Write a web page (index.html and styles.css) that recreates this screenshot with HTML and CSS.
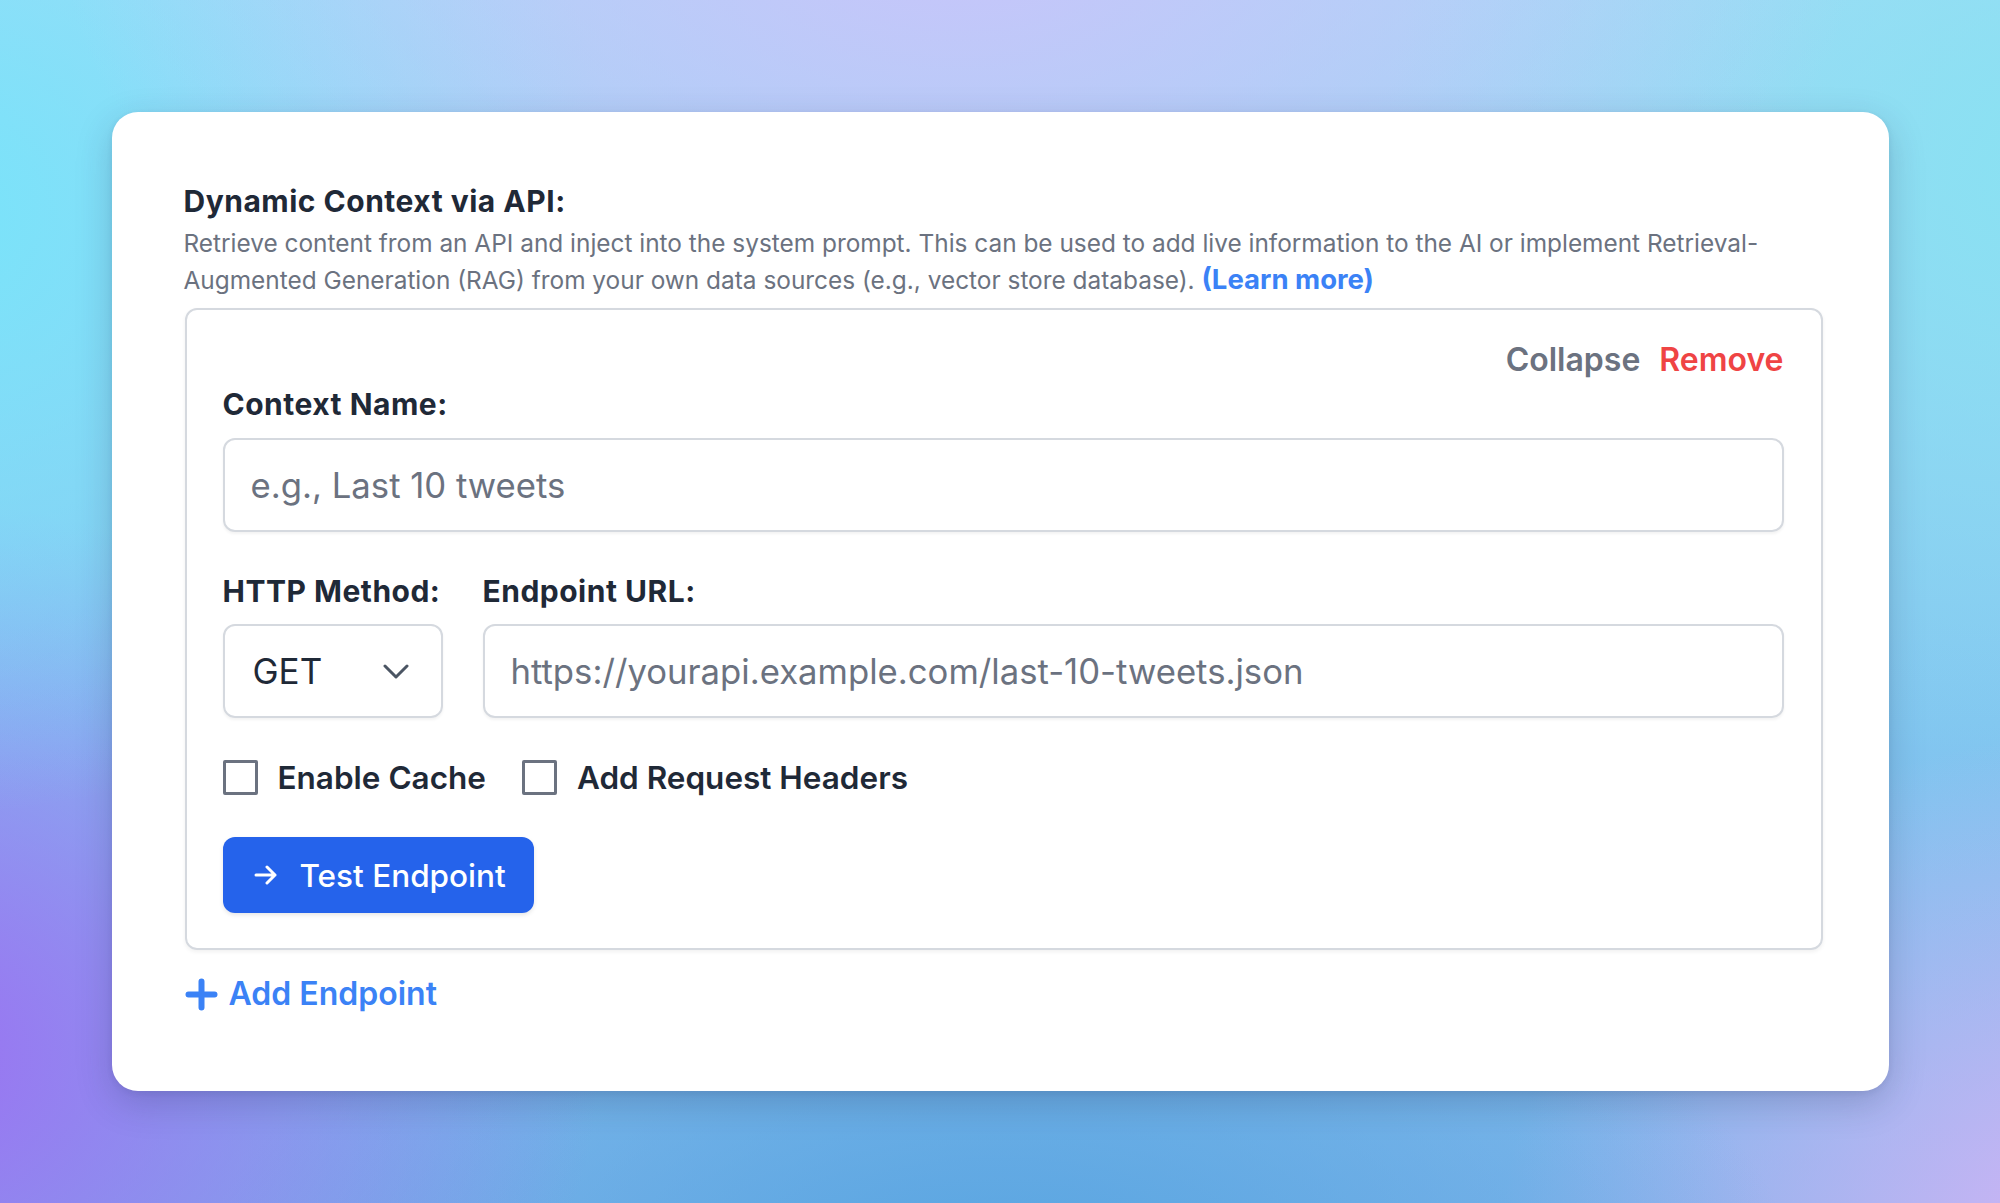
FILE: index.html
```html
<!DOCTYPE html>
<html lang="en">
<head>
<meta charset="utf-8">
<title>Dynamic Context via API</title>
<link rel="stylesheet" href="styles.css">
</head>
<body>
<div class="card">
  <h2 class="title">Dynamic Context via API:</h2>
  <p class="desc">Retrieve content from an API and inject into the system prompt. This can be used to add live information to the AI or implement Retrieval-<br>Augmented Generation (RAG) from your own data sources (e.g., vector store database). <a class="learn" href="#">(Learn more)</a></p>
  <div class="endpoint">
    <div class="actions">
      <span class="action collapse">Collapse</span>
      <span class="action remove">Remove</span>
    </div>
    <div class="label first">Context Name:</div>
    <input class="input" type="text" placeholder="e.g., Last 10 tweets">
    <div class="row">
      <div class="field method">
        <div class="label">HTTP Method:</div>
        <div class="select">
          <span>GET</span>
          <svg class="chev" width="26" height="15" viewBox="0 0 26 15"><path d="M2 2 L13 13 L24 2" fill="none" stroke="#4b5563" stroke-width="3" stroke-linecap="round" stroke-linejoin="round"/></svg>
        </div>
      </div>
      <div class="field url">
        <div class="label">Endpoint URL:</div>
        <input class="input" type="text" placeholder="https://yourapi.example.com/last-10-tweets.json">
      </div>
    </div>
    <div class="checks">
      <label class="check"><span class="box"></span><span class="check-text">Enable Cache</span></label>
      <label class="check"><span class="box"></span><span class="check-text">Add Request Headers</span></label>
    </div>
    <button class="btn" type="button">
      <svg class="arrow" width="24" height="20" viewBox="0 0 24 20"><path d="M2 10 H21 M13 2 L21 10 L13 18" fill="none" stroke="#ffffff" stroke-width="3" stroke-linecap="round" stroke-linejoin="round"/></svg>
      <span>Test Endpoint</span>
    </button>
  </div>
  <div class="add">
    <svg class="plus" width="33" height="33" viewBox="0 0 33 33"><path d="M16.5 3.5 V29.5 M3.5 16.5 H29.5" fill="none" stroke="#3b82f6" stroke-width="6" stroke-linecap="round"/></svg>
    <span>Add Endpoint</span>
  </div>
</div>
</body>
</html>
```

FILE: styles.css
```css
* { box-sizing: border-box; }

html, body {
  margin: 0;
  padding: 0;
}

body {
  width: 2000px;
  height: 1203px;
  overflow: hidden;
  font-family: "Inter", "Liberation Sans", sans-serif;
  background-color: #8ec9f2;
  background-image:
    radial-gradient(ellipse 900px 520px at 48% -6%, rgba(200, 196, 250, 1) 0%, rgba(200, 196, 250, 0) 100%),
    radial-gradient(ellipse 700px 600px at -4% 18%, rgba(120, 228, 250, 1) 0%, rgba(120, 228, 250, 0) 100%),
    radial-gradient(ellipse 700px 600px at 104% 14%, rgba(136, 226, 242, 1) 0%, rgba(136, 226, 242, 0) 100%),
    radial-gradient(ellipse 720px 560px at -6% 88%, rgba(156, 110, 242, 1) 0%, rgba(156, 110, 242, 0) 100%),
    radial-gradient(ellipse 800px 420px at 50% 108%, rgba(86, 164, 224, 1) 0%, rgba(86, 164, 224, 0) 100%),
    radial-gradient(ellipse 620px 520px at 106% 104%, rgba(214, 180, 246, 1) 0%, rgba(214, 180, 246, 0) 100%),
    linear-gradient(180deg, #a6d8f6 0%, #82c6f0 60%, #7cb4ea 100%);
}

.card {
  width: 1777px;
  height: 979px;
  margin: 112px auto 0;
  padding: 71px 66px 0 72px;
  background: #ffffff;
  border-radius: 26px;
  box-shadow: 0 12px 36px rgba(30, 40, 80, 0.22), 0 2px 6px rgba(30, 40, 80, 0.08);
}

.title {
  margin: 0;
  font-size: 30px;
  line-height: 36px;
  font-weight: 700;
  letter-spacing: 0.5px;
  color: #1f2937;
}

.desc {
  margin: 6px 0 0;
  font-size: 24.4px;
  line-height: 36px;
  font-weight: 400;
  color: #6b7280;
}

.learn {
  color: #3b82f6;
  font-size: 27.5px;
  font-weight: 700;
  text-decoration: none;
}

.endpoint {
  margin: 10px 0 0 1px;
  border: 2px solid #d5d9df;
  border-radius: 12px;
  padding: 36px 37px 35px 36px;
  box-shadow: 0 2px 4px rgba(0, 0, 0, 0.06);
}

.actions {
  display: flex;
  justify-content: flex-end;
  gap: 19px;
  height: 28px;
  font-size: 32px;
  line-height: 28px;
  font-weight: 600;
}

.collapse { color: #6b7280; }
.remove { color: #ef4444; }

.label {
  font-size: 30px;
  line-height: 36px;
  font-weight: 700;
  letter-spacing: 0.5px;
  color: #1f2937;
}

.label.first { margin-top: 12px; }

.input {
  display: block;
  width: 100%;
  height: 94px;
  margin: 16px 0 0;
  padding: 0 26px;
  border: 2px solid #d5d9df;
  border-radius: 12px;
  background: #ffffff;
  font-family: "Inter", "Liberation Sans", sans-serif;
  font-size: 34.7px;
  color: #1f2937;
  box-shadow: 0 2px 3px rgba(0, 0, 0, 0.05);
  outline: none;
}

.input::placeholder { color: #6b7280; opacity: 1; }

.row {
  display: flex;
  gap: 40px;
  margin-top: 41px;
}

.field .input,
.field .select { margin-top: 15px; }

.method { width: 220px; flex: none; }
.url { flex: 1; }

.select {
  display: flex;
  align-items: center;
  justify-content: space-between;
  height: 94px;
  padding: 0 32px 0 28px;
  border: 2px solid #d5d9df;
  border-radius: 12px;
  box-shadow: 0 2px 3px rgba(0, 0, 0, 0.05);
  font-size: 35px;
  color: #1f2937;
}

.chev { display: block; margin-top: 1px; }

.checks {
  display: flex;
  gap: 36px;
  margin-top: 42px;
}

.check {
  display: flex;
  align-items: center;
  gap: 20px;
  height: 35px;
}

.box {
  width: 35px;
  height: 35px;
  border: 3px solid #6b7280;
  border-radius: 2px;
  background: #ffffff;
}

.check-text {
  font-size: 31.5px;
  line-height: 35px;
  font-weight: 600;
  color: #1f2937;
}

.btn {
  display: flex;
  align-items: center;
  gap: 22px;
  height: 76px;
  margin-top: 42px;
  padding: 0 28px 0 31px;
  border: none;
  border-radius: 12px;
  background: #2563eb;
  color: #ffffff;
  font-family: "Inter", "Liberation Sans", sans-serif;
  font-size: 31.5px;
  font-weight: 500;
  box-shadow: 0 2px 4px rgba(0, 0, 0, 0.1);
}

.arrow { display: block; }

.add {
  display: flex;
  align-items: center;
  gap: 11px;
  margin-top: 24px;
  margin-left: 1px;
  height: 40px;
  font-size: 32px;
  line-height: 40px;
  font-weight: 600;
  color: #3b82f6;
}

.plus { display: block; }
```
